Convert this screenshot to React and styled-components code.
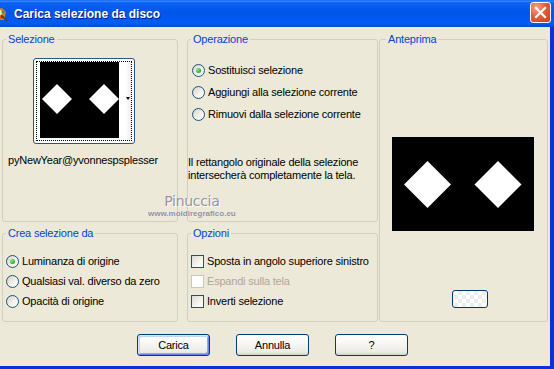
import React from 'react';
import styled, { createGlobalStyle } from 'styled-components';

const GlobalStyle = createGlobalStyle`
  html, body {
    margin: 0;
    padding: 0;
    background: #ffffff;
  }
  body {
    font-family: "Liberation Sans", Arial, sans-serif;
    font-size: 11px;
    color: #000000;
  }
`;

const Window = styled.div`
  width: 554px;
  height: 369px;
  display: flex;
  flex-direction: column;
  overflow: hidden;
`;

const TitleBar = styled.div`
  height: 27px;
  flex: none;
  display: flex;
  align-items: center;
  background: linear-gradient(
    to bottom,
    #0a5cf0 0%,
    #3d8cff 4%,
    #0a62f5 10%,
    #0055e8 45%,
    #005cf5 85%,
    #0049d9 100%
  );
`;

const AppIcon = styled.svg`
  width: 16px;
  height: 16px;
  margin-left: -8px;
  flex: none;
`;

const Title = styled.div`
  margin-left: 6px;
  font-family: "Liberation Sans", Arial, sans-serif;
  font-weight: bold;
  font-size: 12px;
  color: #ffffff;
  text-shadow: 1px 1px 0 #0a1a8a;
`;

const CloseButton = styled.div`
  margin-left: auto;
  margin-right: 3px;
  margin-bottom: 3px;
  width: 21px;
  height: 21px;
  box-sizing: border-box;
  border: 1px solid #ffffff;
  border-radius: 3px;
  background: radial-gradient(circle at 30% 25%, #f0a68a 0%, #e0603c 45%, #c8401a 100%);
  display: flex;
  align-items: center;
  justify-content: center;
`;

const Body = styled.div`
  flex: 1;
  background: #ece9d8;
  border-right: 4px solid #0a32d6;
  border-bottom: 3px solid #0a32d6;
  padding: 6px 0 0 2px;
  box-sizing: border-box;
  display: flex;
  flex-direction: column;
`;

const Panels = styled.div`
  display: flex;
  gap: 1px;
  position: relative;
`;

const LeftGrid = styled.div`
  display: grid;
  grid-template-columns: 176px 191px;
  grid-template-rows: 189px 95px;
  column-gap: 9px;
  row-gap: 5px;
`;

const Group = styled.fieldset`
  margin: 0;
  padding: 0;
  min-width: 0;
  border: 1px solid #d0d0bf;
  border-radius: 3px;
  box-sizing: border-box;
  display: flex;
  flex-direction: column;
  width: ${(p) => (p.$width ? `${p.$width}px` : 'auto')};
  height: ${(p) => (p.$height ? `${p.$height}px` : 'auto')};
  padding-top: ${(p) => p.$pt || 0}px;
`;

const Legend = styled.legend`
  margin-left: ${(p) => p.$ml || 3}px;
  padding: 0 2px;
  line-height: 13px;
  font-size: 11px;
  letter-spacing: -0.2px;
  color: #0046d5;
`;

const ThumbButton = styled.div`
  margin: 12px 0 0 30px;
  width: 102px;
  height: 86px;
  box-sizing: border-box;
  border: 1px solid #2a5585;
  border-radius: 3px;
  background: #ffffff;
  padding: 2px;
`;

const FocusRect = styled.div`
  height: 100%;
  box-sizing: border-box;
  border: 1px dotted #000000;
  display: flex;
  padding-left: 3px;
`;

const ArrowStrip = styled.div`
  flex: 1;
  display: flex;
  align-items: center;
  justify-content: flex-end;
  background: linear-gradient(to right, #ffffff 0%, #ffffff 55%, #ecebe4 100%);
  padding-bottom: 6px;
  &::after {
    content: '';
    width: 0;
    height: 0;
    border-left: 2px solid transparent;
    border-right: 2px solid transparent;
    border-top: 3px solid #000000;
    margin-right: 1px;
  }
`;

const Text = styled.div`
  line-height: 13px;
  letter-spacing: -0.2px;
  white-space: nowrap;
  margin-top: ${(p) => p.$mt || 0}px;
  margin-left: ${(p) => p.$ml || 0}px;
`;

const OptionList = styled.div`
  display: flex;
  flex-direction: column;
  padding-left: ${(p) => p.$pl || 0}px;
`;

const OptionRow = styled.div`
  display: flex;
  align-items: center;
  gap: 3px;
  height: ${(p) => p.$h}px;
  letter-spacing: -0.2px;
  white-space: nowrap;
  color: ${(p) => (p.$disabled ? '#aca899' : '#000000')};
`;

const Radio = styled.span`
  width: 13px;
  height: 13px;
  flex: none;
  box-sizing: border-box;
  border-radius: 50%;
  border: 1px solid #1c5180;
  background: linear-gradient(135deg, #d6d3c2 0%, #f2f1ea 55%, #ffffff 100%);
  display: flex;
  align-items: center;
  justify-content: center;
  &::after {
    content: '';
    display: ${(p) => (p.$checked ? 'block' : 'none')};
    width: 5px;
    height: 5px;
    border-radius: 50%;
    background: radial-gradient(circle at 35% 35%, #8ef08e 0%, #2fb52f 60%, #1a8f1a 100%);
  }
`;

const Checkbox = styled.span`
  width: 13px;
  height: 13px;
  flex: none;
  box-sizing: border-box;
  border: 1px solid ${(p) => (p.$disabled ? '#cac8bb' : '#1c5180')};
  background: ${(p) =>
    p.$disabled ? '#ffffff' : 'linear-gradient(135deg, #dcdcd5 0%, #f4f4f0 60%, #ffffff 100%)'};
`;

const Preview = styled.svg`
  display: block;
  margin: 91px 0 0 12px;
  width: 142px;
  height: 94px;
`;

const SmallButton = styled.div`
  margin: 59px 0 0 72px;
  width: 36px;
  height: 18px;
  box-sizing: border-box;
  border: 1px solid #003c74;
  border-radius: 3px;
  background:
    repeating-conic-gradient(#ececec 0% 25%, #ffffff 0% 50%) 50% 50% / 8px 8px;
`;

const Watermark = styled.div`
  position: absolute;
  left: 146px;
  top: 160px;
  display: flex;
  flex-direction: column;
  align-items: center;
  pointer-events: none;
`;

const WatermarkName = styled.div`
  font-family: "DejaVu Sans", Verdana, sans-serif;
  font-size: 14px;
  line-height: 16px;
  letter-spacing: -0.3px;
  color: #9494a8;
  text-shadow: 1px 1px 0 #ffffff;
`;

const WatermarkSite = styled.div`
  font-family: "Liberation Sans", Arial, sans-serif;
  font-size: 8px;
  font-weight: bold;
  line-height: 10px;
  color: #8e8e9e;
  text-shadow: 0 0 1px #ffffff;
`;

const ButtonRow = styled.div`
  display: flex;
  gap: 26px;
  margin-top: 12px;
  padding-left: 135px;
`;

const DialogButton = styled.button`
  width: 73px;
  height: 22px;
  box-sizing: border-box;
  padding: 0;
  border: 1px solid #003c74;
  border-radius: 3px;
  font-family: "Liberation Sans", Arial, sans-serif;
  font-size: 11px;
  letter-spacing: -0.2px;
  color: #000000;
  background: linear-gradient(to bottom, #ffffff 0%, #f7f7f4 40%, #ecebe6 85%, #d6d0c5 100%);
  box-shadow: ${(p) =>
    p.$default
      ? 'inset 1px 1px 0 #cee7ff, inset -1px -1px 0 #6982ee, inset 2px 2px 0 #bcd4f6, inset -2px -2px 0 #89ade4'
      : 'none'};
`;

const Diamonds = ({ a, b, cy, r }) => (
  <>
    <polygon points={`${a},${cy - r} ${a + r},${cy} ${a},${cy + r} ${a - r},${cy}`} fill="#fff" />
    <polygon points={`${b},${cy - r} ${b + r},${cy} ${b},${cy + r} ${b - r},${cy}`} fill="#fff" />
  </>
);

const App = () => {
  return (
    <>
      <GlobalStyle />
      <Window>
        <TitleBar>
          <AppIcon viewBox="0 0 16 16">
            <path d="M2 3 L10 2 L14 6 L12 14 L4 14 L1 9 Z" fill="#d87a2a" />
            <path d="M4 5 L9 4 L11 7 L8 10 L4 9 Z" fill="#f4e0b0" />
            <circle cx="11" cy="6" r="1.5" fill="#2a9a3a" />
            <circle cx="10" cy="11" r="1.5" fill="#c02020" />
            <path d="M9 9 L15 15" stroke="#6a3a10" strokeWidth="1.5" />
          </AppIcon>
          <Title>Carica selezione da disco</Title>
          <CloseButton>
            <svg width="13" height="13" viewBox="0 0 13 13">
              <path d="M2 2 L11 11 M11 2 L2 11" stroke="#ffffff" strokeWidth="2.2" strokeLinecap="square" />
            </svg>
          </CloseButton>
        </TitleBar>
        <Body>
          <Panels>
            <LeftGrid>
              <Group>
                <Legend>Selezione</Legend>
                <ThumbButton>
                  <FocusRect>
                    <svg width="79" height="76" viewBox="0 0 79 76">
                      <rect width="79" height="76" fill="#000" />
                      <Diamonds a={17} b={64} cy={37} r={15} />
                    </svg>
                    <ArrowStrip />
                  </FocusRect>
                </ThumbButton>
                <Text $mt={10} $ml={5}>pyNewYear@yvonnespsplesser</Text>
              </Group>
              <Group $pt={13}>
                <Legend>Operazione</Legend>
                <OptionList $pl={4}>
                  <OptionRow $h={22}>
                    <Radio $checked />
                    Sostituisci selezione
                  </OptionRow>
                  <OptionRow $h={22}>
                    <Radio />
                    Aggiungi alla selezione corrente
                  </OptionRow>
                  <OptionRow $h={22}>
                    <Radio />
                    Rimuovi dalla selezione corrente
                  </OptionRow>
                </OptionList>
                <Text $mt={31}>
                  Il rettangolo originale della selezione
                  <br />
                  intersecherà completamente la tela.
                </Text>
              </Group>
              <Group $pt={11}>
                <Legend>Crea selezione da</Legend>
                <OptionList $pl={3}>
                  <OptionRow $h={20}>
                    <Radio $checked />
                    Luminanza di origine
                  </OptionRow>
                  <OptionRow $h={20}>
                    <Radio />
                    Qualsiasi val. diverso da zero
                  </OptionRow>
                  <OptionRow $h={20}>
                    <Radio />
                    Opacità di origine
                  </OptionRow>
                </OptionList>
              </Group>
              <Group $pt={11}>
                <Legend>Opzioni</Legend>
                <OptionList $pl={3}>
                  <OptionRow $h={20}>
                    <Checkbox />
                    Sposta in angolo superiore sinistro
                  </OptionRow>
                  <OptionRow $h={20} $disabled>
                    <Checkbox $disabled />
                    Espandi sulla tela
                  </OptionRow>
                  <OptionRow $h={20}>
                    <Checkbox />
                    Inverti selezione
                  </OptionRow>
                </OptionList>
              </Group>
            </LeftGrid>
            <Group $width={169} $height={289}>
              <Legend $ml={6}>Anteprima</Legend>
              <Preview viewBox="0 0 142 94">
                <rect width="142" height="94" fill="#000" />
                <Diamonds a={35.5} b={106} cy={47.5} r={23.5} />
              </Preview>
              <SmallButton />
            </Group>
            <Watermark>
              <WatermarkName>Pinuccia</WatermarkName>
              <WatermarkSite>www.moidiregrafico.eu</WatermarkSite>
            </Watermark>
          </Panels>
          <ButtonRow>
            <DialogButton $default>Carica</DialogButton>
            <DialogButton>Annulla</DialogButton>
            <DialogButton>?</DialogButton>
          </ButtonRow>
        </Body>
      </Window>
    </>
  );
};

export default App;
